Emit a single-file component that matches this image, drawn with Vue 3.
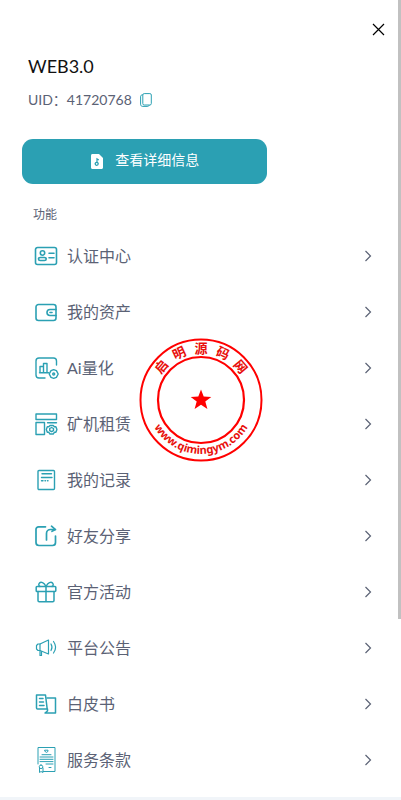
<template>
  <div class="page">
    <aside class="drawer">
      <header class="top">
        <button type="button" class="close" aria-label="关闭">
          <svg width="13" height="13" viewBox="0 0 13 13">
            <path d="M1 1l11 11M12 1L1 12" stroke="#000" stroke-width="1.2" fill="none" />
          </svg>
        </button>
      </header>

      <section class="user">
        <h1>WEB3.0</h1>
        <div class="uid">
          <span>UID：{{ uid }}</span>
          <button type="button" class="copy" aria-label="复制" @click="copiar">
            <svg width="12" height="14" viewBox="0 0 12 14" fill="none" stroke="#2ba0b3">
              <rect x="2.8" y=".6" width="8.5" height="11.4" rx="1.4" />
              <path d="M2.8 1.8C1.3 1.8.6 2.4.6 3.8v7.4c0 1.5.8 2.2 2.2 2.2h4.4c1.3 0 1.9-.5 2.1-1.4" />
            </svg>
          </button>
        </div>
      </section>

      <button type="button" class="detail">
        <svg width="12" height="15" viewBox="0 0 12 15">
          <path d="M1.5 0H8l4 4v9.5c0 .9-.6 1.5-1.5 1.5h-9C.6 15 0 14.4 0 13.5v-12C0 .6.6 0 1.5 0z" fill="#fff" />
          <circle cx="5.7" cy="9.8" r="1.5" fill="none" stroke="#2ba0b3" stroke-width="1.3" />
          <path d="M6 8.4V4.8l1.8 1.3" fill="none" stroke="#2ba0b3" stroke-width="1.2" />
        </svg>
        <span>查看详细信息</span>
      </button>

      <h2>功能</h2>

      <nav class="menu">
        <a v-for="m in menu" :key="m.texto" href="#" @click.prevent>
          <svg class="icon" width="24" height="24" viewBox="0 0 24 24">
            <path v-for="(t, i) in m.trazos" :key="i" :d="t" :stroke-width="m.grosor" />
          </svg>
          <span class="label">{{ m.texto }}</span>
          <svg class="arrow" width="8" height="12" viewBox="0 0 8 12">
            <path d="M1.5 1l5 5-5 5" />
          </svg>
        </a>
      </nav>
      <div class="scrollbar"></div>
    </aside>

    <svg class="seal" width="124" height="124" viewBox="-62 -62 124 124">
      <defs>
        <path id="seal-arc" d="M-54 0A54 54 0 0 0 54 0" />
      </defs>
      <circle r="60.5" fill="none" stroke="#f00" stroke-width="2" />
      <circle r="43" fill="none" stroke="#f00" stroke-width="2.2" />
      <path d="M0-10.5l2.7 7.1 7.6.3-6 4.7 2.1 7.3L0 4.7l-6.4 4.2 2.1-7.3-6-4.7 7.6-.3z" fill="#f00" />
      <text
        v-for="(c, i) in sello"
        :key="c"
        class="seal-char"
        y="-47"
        :transform="`rotate(${(i - 2) * 25})`"
      >{{ c }}</text>
      <text class="seal-url">
        <textPath href="#seal-arc" startOffset="50%">www.qimingym.com</textPath>
      </text>
    </svg>
  </div>
</template>

<script setup>
import { ref } from 'vue'

const uid = ref('41720768')
const sello = ['启', '明', '源', '码', '网']

const menu = [
  {
    texto: '认证中心',
    grosor: 1.6,
    trazos: [
      'M3.5 3.5h17a2 2 0 0 1 2 2v13a2 2 0 0 1-2 2h-17a2 2 0 0 1-2-2v-13a2 2 0 0 1 2-2z',
      'M8.5 6.8a2.2 2.2 0 1 1 0 4.4 2.2 2.2 0 0 1 0-4.4z',
      'M6.3 13.5h4c1.2 0 1.9.7 1.9 1.6s-.7 1.4-1.7 1.4H6.2c-1 0-1.7-.5-1.7-1.4s.7-1.6 1.8-1.6z',
      'M15 9.2h5M15 13.8h5'
    ]
  },
  {
    texto: '我的资产',
    grosor: 1.6,
    trazos: [
      'M22 9.5V7a2.5 2.5 0 0 0-2.5-2.5h-15A2.5 2.5 0 0 0 2 7v11a2.5 2.5 0 0 0 2.5 2.5h15A2.5 2.5 0 0 0 22 18v-2.5',
      'M22 9.5h-6a3 3 0 0 0 0 6h6z',
      'M16 12.5h2'
    ]
  },
  {
    texto: 'Ai量化',
    grosor: 1.4,
    trazos: [
      'M22.5 9V5a3 3 0 0 0-3-3H5a3 3 0 0 0-3 3v14a3 3 0 0 0 3 3h6',
      'M6 16.5v-6h3.5v6M9.5 16.5v-9H13v9M5.5 16.7h9',
      'M19.7 13.7l2.7 1 1.8 3.3-1.8 3.3-2.7 1-2.7-1-1.8-3.3 1.8-3.3z',
      'M19.7 17a1 1 0 1 1 0 2 1 1 0 0 1 0-2z'
    ]
  },
  {
    texto: '矿机租赁',
    grosor: 1.4,
    trazos: [
      'M2 2h20.5v5.5H2z',
      'M2 10.5h8.5v12H2z',
      'M13.5 10.8h9',
      'M16 13.5h3.2l1.2 1.2h1.5l1 2.8-1 2.8h-1.5l-1.2 1.7H16l-1.2-1.7h-1.5l-1-2.8 1-2.8h1.5z',
      'M17.6 15.5l1.9 1v2.1l-1.9 1-1.9-1v-2.1z'
    ]
  },
  {
    texto: '我的记录',
    grosor: 1.4,
    trazos: [
      'M5 2.5h14.5a1 1 0 0 1 1 1v17a1 1 0 0 1-1 1H5a1 1 0 0 1-1-1v-17a1 1 0 0 1 1-1z',
      'M8 5.7h9.5M7.5 9.5H18M7.5 12.7H9M11 12.7h.5M13.5 12.7h.5'
    ]
  },
  {
    texto: '好友分享',
    grosor: 1.7,
    trazos: [
      'M11.5 2.8h-7A2.5 2.5 0 0 0 2 5.3v13.2a3 3 0 0 0 3 3h13.5a3 3 0 0 0 3-3V12',
      'M12.5 16V9.5a4 4 0 0 1 4-4H21',
      'M17.5 2.2l4 3.4L18 7.3'
    ]
  },
  {
    texto: '官方活动',
    grosor: 1.5,
    trazos: [
      'M3 6.5h18a.8.8 0 0 1 .8.8v3.4a.8.8 0 0 1-.8.8H3a.8.8 0 0 1-.8-.8V7.3a.8.8 0 0 1 .8-.8z',
      'M4 11.5v9c0 .8.3 1.2 1.2 1.2h13.6c.9 0 1.2-.4 1.2-1.2v-9M12 6.5v15',
      'M12 6.5C10 2.5 7 1.5 5.5 3S5 6 6 6.5M12 6.5c2-4 5-5 6.5-3.5S19 6 18 6.5'
    ]
  },
  {
    texto: '平台公告',
    grosor: 1.2,
    trazos: [
      'M6 8l8.5-4v14L6 14.5z',
      'M6 8H4L2.5 9.5V13L4 14.5h2',
      'M6 14.5v5h1.5v-4',
      'M17 8c1.2 2 1.2 4.5 0 6.5M19.5 5.5c2.6 3.5 2.6 8 0 11.5'
    ]
  },
  {
    texto: '白皮书',
    grosor: 1.5,
    trazos: [
      'M2.5 3h9l1.7 14H3.5a1 1 0 0 1-1-1z',
      'M13 6h8.5v15H11l2.5-2v-2',
      'M5.5 6.5H9M5.5 10h4M5.5 13.5H10'
    ]
  },
  {
    texto: '服务条款',
    grosor: 1,
    trazos: [
      'M9 23.5h12V-.5H4V16',
      'M11 2.2h3v1.2l-1.5 1-1.5-1z',
      'M8 6.7h9M6 9h13M6 11.3h13M6 13.6h13M12 16h7M15 19.5h2',
      'M7 17a1.8 1.8 0 1 1 0 3.6A1.8 1.8 0 0 1 7 17zM5.5 20v4.5l1.5-1 2 1V20'
    ]
  }
]

function copiar() {
  navigator.clipboard?.writeText(uid.value)
}
</script>

<style>
body {
  margin: 0;
  background: #f1f5f9;
}
</style>

<style scoped>
.page {
  position: relative;
  padding-bottom: 3px;
  font-family: Lato, "Liberation Sans", "Noto Sans CJK SC", sans-serif;
  color: #5b6275;
}

.drawer {
  position: relative;
  background: #fff;
  padding-bottom: 9px;
}

.top {
  display: flex;
  justify-content: flex-end;
  padding: 20px 13px 0;
}

button {
  border: none;
  background: none;
  padding: 0;
  font: inherit;
  cursor: pointer;
}

.close {
  display: flex;
  padding: 3px;
}

.close svg {
  display: block;
}

.user {
  padding: 14px 28px 0;
}

h1 {
  margin: 0;
  font-size: 18px;
  line-height: 26px;
  font-weight: 400;
  color: #111;
}

.uid {
  display: flex;
  align-items: center;
  gap: 8px;
  margin-top: 10px;
  font-size: 14px;
  line-height: 22px;
}

.copy {
  display: flex;
}

.detail {
  display: flex;
  align-items: center;
  justify-content: center;
  gap: 12px;
  width: 61%;
  height: 45px;
  margin: 28px 0 0 22px;
  padding-left: 2px;
  border-radius: 11px;
  background: #2ba0b3;
  color: #fff;
  font-size: 14px;
}

.detail span {
  line-height: 20px;
  padding-bottom: 4px;
}

h2 {
  margin: 21px 0 0 33px;
  font-size: 12px;
  line-height: 20px;
  font-weight: 400;
}

.menu {
  margin-top: 3px;
}

.menu a {
  display: flex;
  align-items: center;
  height: 56px;
  padding: 0 29px 0 34px;
  color: inherit;
  font-size: 16px;
  text-decoration: none;
}

.icon {
  flex: none;
  overflow: visible;
  fill: none;
  stroke: #2ba0b3;
  stroke-linecap: round;
  stroke-linejoin: round;
}

.label {
  flex: 1;
  margin-left: 9px;
  line-height: 24px;
}

.arrow {
  fill: none;
  stroke: #5b6275;
  stroke-width: 1.2;
}

.scrollbar {
  position: absolute;
  top: 0;
  right: 0;
  width: 3px;
  height: 619px;
  background: #c1c1c1;
}

.seal {
  position: absolute;
  top: 50%;
  left: 50%;
  transform: translate(-50%, -50%);
  pointer-events: none;
}

.seal-char {
  fill: #e8100c;
  font: bold 13px "Noto Sans CJK SC", sans-serif;
  text-anchor: middle;
}

.seal-url {
  fill: #e8100c;
  font: bold 11px "Noto Sans", sans-serif;
  text-anchor: middle;
}
</style>
